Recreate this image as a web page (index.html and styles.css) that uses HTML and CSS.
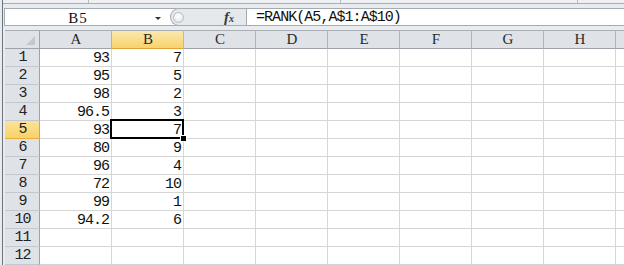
FILE: index.html
```html
<!DOCTYPE html>
<html>
<head>
<meta charset="utf-8">
<link rel="stylesheet" href="styles.css">
</head>
<body>
<div class="app">
  <div class="ribbon-edge">
    <div class="seg s1"></div>
    <div class="seg s2"></div>
    <div class="seg s3"></div>
    <div class="seg s4"></div>
  </div>
  <div class="fbar">
    <div class="namebox">
      <span class="nb-text">B5</span>
      <span class="nb-arrow"></span>
    </div>
    <div class="pill">
      <span class="knob"></span>
      <span class="fx"><span class="f">f</span><span class="x">x</span></span>
    </div>
    <div class="formula">=RANK(A5,A$1:A$10)</div>
  </div>
  <div class="sheet">
    <div class="hd corner"><span class="tri"></span></div>
    <div class="hd col">A</div>
    <div class="hd col sel">B</div>
    <div class="hd col">C</div>
    <div class="hd col">D</div>
    <div class="hd col">E</div>
    <div class="hd col">F</div>
    <div class="hd col">G</div>
    <div class="hd col">H</div>
    <div class="hd col"></div>

    <div class="rh">1</div><div class="c">93</div><div class="c">7</div><div class="c"></div><div class="c"></div><div class="c"></div><div class="c"></div><div class="c"></div><div class="c"></div><div class="c"></div>
    <div class="rh">2</div><div class="c">95</div><div class="c">5</div><div class="c"></div><div class="c"></div><div class="c"></div><div class="c"></div><div class="c"></div><div class="c"></div><div class="c"></div>
    <div class="rh">3</div><div class="c">98</div><div class="c">2</div><div class="c"></div><div class="c"></div><div class="c"></div><div class="c"></div><div class="c"></div><div class="c"></div><div class="c"></div>
    <div class="rh">4</div><div class="c">96.5</div><div class="c">3</div><div class="c"></div><div class="c"></div><div class="c"></div><div class="c"></div><div class="c"></div><div class="c"></div><div class="c"></div>
    <div class="rh sel">5</div><div class="c">93</div><div class="c active">7<span class="selbox"></span><span class="handle"></span></div><div class="c"></div><div class="c"></div><div class="c"></div><div class="c"></div><div class="c"></div><div class="c"></div><div class="c"></div>
    <div class="rh">6</div><div class="c">80</div><div class="c">9</div><div class="c"></div><div class="c"></div><div class="c"></div><div class="c"></div><div class="c"></div><div class="c"></div><div class="c"></div>
    <div class="rh">7</div><div class="c">96</div><div class="c">4</div><div class="c"></div><div class="c"></div><div class="c"></div><div class="c"></div><div class="c"></div><div class="c"></div><div class="c"></div>
    <div class="rh">8</div><div class="c">72</div><div class="c">10</div><div class="c"></div><div class="c"></div><div class="c"></div><div class="c"></div><div class="c"></div><div class="c"></div><div class="c"></div>
    <div class="rh">9</div><div class="c">99</div><div class="c">1</div><div class="c"></div><div class="c"></div><div class="c"></div><div class="c"></div><div class="c"></div><div class="c"></div><div class="c"></div>
    <div class="rh">10</div><div class="c">94.2</div><div class="c">6</div><div class="c"></div><div class="c"></div><div class="c"></div><div class="c"></div><div class="c"></div><div class="c"></div><div class="c"></div>
    <div class="rh">11</div><div class="c"></div><div class="c"></div><div class="c"></div><div class="c"></div><div class="c"></div><div class="c"></div><div class="c"></div><div class="c"></div><div class="c"></div>
    <div class="rh">12</div><div class="c"></div><div class="c"></div><div class="c"></div><div class="c"></div><div class="c"></div><div class="c"></div><div class="c"></div><div class="c"></div><div class="c"></div>
  </div>
</div>
</body>
</html>
```
FILE: styles.css
```css
* { box-sizing: border-box; }
html, body { margin: 0; padding: 0; }
body {
  background: #e9ecef;
  width: 624px;
  height: 265px;
  overflow: hidden;
  font-family: "Liberation Mono", monospace;
}
.app {
  margin-left: 2px;
  border-left: 1px solid #6e747c;
  height: 265px;
  overflow: hidden;
}
.ribbon-edge {
  display: grid;
  grid-template-columns: 86px 252px 237px 1fr;
  height: 4px;
  border-bottom: 1px solid #a9aeb4;
  background: #eef0f3;
}
.seg { border-right: 1px solid #b6bbc1; }
.seg.s4 { border-right: none; }

.fbar {
  display: flex;
  height: 18px;
  margin-top: 4px;
  margin-left: 1px;
  border-top: 1px solid #a5abb3;
  border-bottom: 1px solid #a5abb3;
  border-left: 1px solid #a5abb3;
  background: #fff;
}
.namebox {
  display: flex;
  width: 161px;
  align-items: center;
}
.nb-text {
  width: 146px;
  text-align: center;
  font-family: "Liberation Serif", serif;
  font-size: 15px;
  letter-spacing: 1px;
  line-height: 16px;
  color: #111;
  padding-top: 1px;
}
.nb-arrow {
  width: 0;
  height: 0;
  margin-left: 4px;
  margin-top: 2px;
  border-left: 3px solid transparent;
  border-right: 3px solid transparent;
  border-top: 3px solid #333;
}
.pill {
  display: flex;
  align-items: center;
  width: 76px;
  height: 18px;
  margin-top: -1px;
  margin-left: 4px;
  border: 1px solid #a5abb3;
  border-right: none;
  border-radius: 9px 0 0 9px;
  background: #e6e9ec;
}
.knob {
  width: 11px;
  height: 11px;
  margin-left: 2px;
  border-radius: 50%;
  border: 1px solid #b9bec4;
  background: radial-gradient(circle at 45% 40%, #ffffff 0%, #eef0f2 50%, #d5d9de 100%);
}
.fx {
  margin-left: auto;
  margin-right: 12px;
  font-family: "Liberation Serif", serif;
  font-style: italic;
  color: #3a3a3a;
  line-height: 14px;
  padding-top: 1px;
}
.fx .f { font-size: 15px; font-weight: bold; }
.fx .x { font-size: 10px; font-weight: bold; }
.formula {
  flex: 1;
  border-left: 1px solid #a5abb3;
  padding-left: 9px;
  font-size: 15px;
  letter-spacing: -0.95px;
  line-height: 16px;
  color: #111;
  padding-top: 1px;
}

.sheet {
  display: grid;
  grid-template-columns: 35px repeat(9, 72px);
  grid-template-rows: 19px;
  grid-auto-rows: 18px;
  margin-top: 4px;
  margin-left: 2px;
  width: 619px;
  background: #fff;
  font-size: 15px;
  letter-spacing: -1px;
  color: #111;
}
.hd {
  background: #dfe3e8;
  border-top: 1px solid #a9aeb5;
  border-bottom: 1px solid #9ea3aa;
  border-right: 1px solid #b0b5bc;
  display: flex;
  justify-content: center;
  align-items: flex-end;
  font-family: "Liberation Serif", serif;
  letter-spacing: 0;
  line-height: 15px;
  padding-bottom: 1px;
  padding-left: 1px;
  color: #2a2a2a;
}
.hd.corner {
  position: relative;
  border-right: 1px solid #9ea3aa;
}
.tri {
  position: absolute;
  right: 4px;
  bottom: 3px;
  width: 0;
  height: 0;
  border-left: 9px solid transparent;
  border-bottom: 9px solid #c3c8ce;
}
.hd.sel {
  background: linear-gradient(#fbe8b0, #f7d36b);
  border-bottom: 1px solid #e0a33a;
  border-right: 1px solid #e8b64c;
}
.rh {
  background: #dfe3e8;
  border-right: 1px solid #9ea3aa;
  border-bottom: 1px solid #c3c8ce;
  display: flex;
  justify-content: center;
  align-items: flex-end;
  line-height: 15px;
  padding-bottom: 1px;
  padding-left: 1px;
  color: #222;
}
.rh.sel {
  background: linear-gradient(#fbe39c, #f8d264);
  border-right: 1px solid #e0a33a;
  border-bottom: 1px solid #e6ad45;
}
.c {
  border-right: 1px solid #d6d6d6;
  border-bottom: 1px solid #d6d6d6;
  display: flex;
  justify-content: flex-end;
  align-items: flex-end;
  line-height: 15px;
  padding-right: 2px;
}
.c.active {
  position: relative;
  z-index: 2;
}
.selbox {
  position: absolute;
  left: -2px;
  top: -2px;
  right: -1px;
  bottom: -1px;
  border: 2px solid #000;
}
.handle {
  position: absolute;
  right: -4px;
  bottom: -4px;
  width: 7px;
  height: 7px;
  background: #000;
  border: 1px solid #fff;
}
```
